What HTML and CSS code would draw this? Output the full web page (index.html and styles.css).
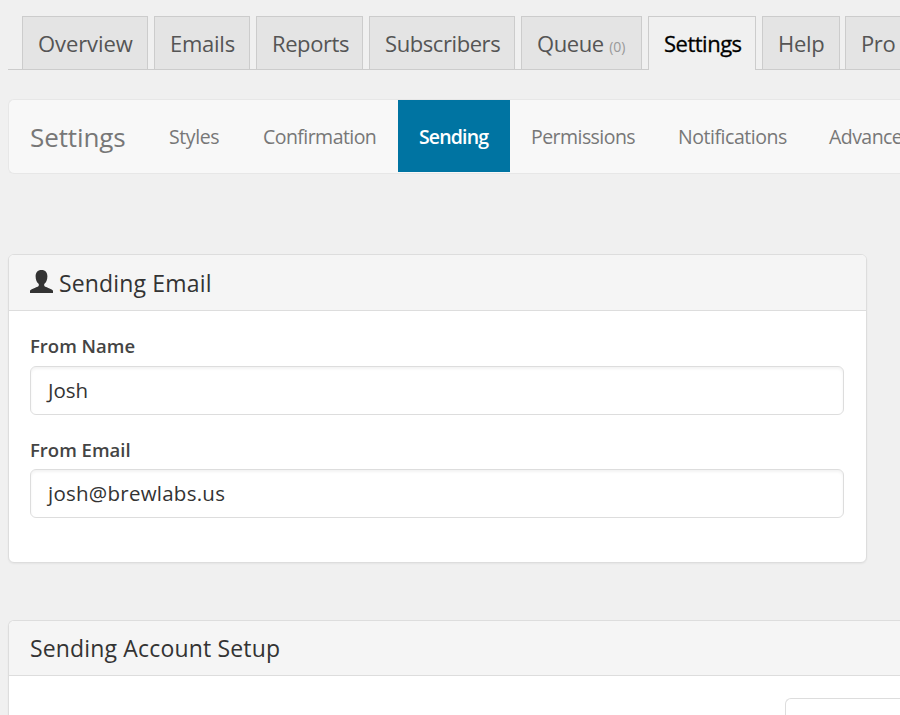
FILE: index.html
```html
<!DOCTYPE html>
<html lang="en">
<head>
<meta charset="utf-8">
<title>Settings</title>
<link rel="stylesheet" href="styles.css">
</head>
<body>
<nav class="tabs">
  <a class="tab overview">Overview</a>
  <a class="tab emails">Emails</a>
  <a class="tab reports">Reports</a>
  <a class="tab subscribers">Subscribers</a>
  <a class="tab queue">Queue <small>(0)</small></a>
  <a class="tab current">Settings</a>
  <a class="tab help">Help</a>
  <a class="tab pro">Pro</a>
</nav>
<nav class="subnav">
  <span class="brand">Settings</span>
  <a class="link styles">Styles</a>
  <a class="link confirmation">Confirmation</a>
  <a class="link active">Sending</a>
  <a class="link permissions">Permissions</a>
  <a class="link notifications">Notifications</a>
  <a class="link advanced">Advanced</a>
</nav>
<section class="panel">
  <h3 class="panel-head"><svg class="user" viewBox="0 0 23 23"><path d="M11.5 0C7.500 0 5.600 2.600 5.600 6.200C5.600 9.800 6.900 12.700 8.800 14.100V15.400C8.500 16.500 7.200 16.800 5.700 17.400L1.300 19.400C.3 19.900 0 20.500 0 21.300V23H23V21.300C23 20.500 22.700 19.900 21.700 19.400L17.300 17.400C15.800 16.800 14.500 16.500 14.200 15.400V14.100C16.100 12.700 17.400 9.800 17.400 6.200C17.400 2.600 15.500 0 11.500 0Z"/></svg><span class="title">Sending Email</span></h3>
  <div class="panel-body">
    <div class="label name">From Name</div>
    <div class="input">Josh</div>
    <div class="label email">From Email</div>
    <div class="input address">josh@brewlabs.us</div>
  </div>
</section>
<section class="panel wide">
  <h3 class="panel-head"><span class="title setup">Sending Account Setup</span></h3>
  <div class="panel-body"><div class="input box"></div></div>
</section>
</body>
</html>
```
FILE: styles.css
```css
* { box-sizing: border-box; }
html, body { height: 715px; overflow: hidden; }
body { margin: 0; padding: 16px 0 0 8px; background: #f0f0f0; font-family: "Open Sans", sans-serif; color: #333; }
.tabs { display: flex; gap: 6px; height: 54px; width: 892px; overflow: hidden; padding-left: 14px; border-bottom: 1px solid #ccc; }
.tabs { overflow: visible; }
.tab { flex: none; height: 53px; padding-left: 15px; border: 1px solid #ccc; border-bottom: 0; background: #e4e4e4; color: #555; font-size: 22px; line-height: 53px; letter-spacing: -.42px; white-space: nowrap; }
.tab small { font-size: 14px; color: #999; letter-spacing: 0; }
.overview { width: 126px; letter-spacing: -.1px; }
.emails { width: 96px; letter-spacing: -.25px; }
.reports { width: 107px; }
.subscribers { width: 146px; }
.queue { width: 121px; letter-spacing: -.4px; }
.current { width: 108px; height: 54px; background: #f0f0f0; color: #000; -webkit-text-stroke: .3px; letter-spacing: -.5px; }
.help { width: 78px; letter-spacing: -.3px; }
.pro { width: 56px; margin-left: -1px; border-right: 0; }
.subnav { display: flex; width: 892px; height: 75px; margin-top: 29px; padding-left: 21px; background: #f8f8f8; border: 1px solid #e7e7e7; border-right: 0; border-radius: 6px 0 0 6px; line-height: 74px; color: #777; }
.brand { flex: none; width: 118px; font-size: 26px; letter-spacing: -.1px; }
.link { flex: none; padding-left: 21px; font-size: 19.5px; letter-spacing: -.55px; white-space: nowrap; }
.styles { width: 94px; letter-spacing: -.4px; }
.confirmation { width: 156px; }
.active { width: 112px; height: 72px; background: #0074a2; color: #fff; font-weight: 600; letter-spacing: -.85px; }
.permissions { width: 147px; }
.notifications { width: 151px; letter-spacing: -.45px; }
.panel { width: 859px; height: 309px; margin-top: 80px; background: #fff; border: 1px solid #ddd; border-radius: 6px; box-shadow: 0 1px 2px rgba(0,0,0,.05); overflow: hidden; }
.wide { width: 892px; height: 200px; margin-top: 57px; border-right: 0; border-radius: 6px 0 0 0; }
.panel-head { display: flex; align-items: center; height: 56px; margin: 0; padding-left: 21px; background: #f5f5f5; border-bottom: 1px solid #ddd; font-size: 23px; font-weight: 400; letter-spacing: .16px; line-height: 30px; }
.user { width: 23px; height: 23px; margin: 0 6px 3px 0; fill: #333; }
.panel-body { padding: 21px; }
.label { height: 34px; font-size: 18.5px; font-weight: 600; line-height: 28px; color: #444; }
.email { margin-top: 21px; }
.input { width: 814px; height: 49px; padding-left: 17px; border: 1px solid #ddd; border-radius: 6px; background: #fff; box-shadow: inset 0 2px 3px rgba(0,0,0,.05); font-size: 20.5px; line-height: 46px; }
.address { letter-spacing: .25px; margin-top: -1px; }
.wide .panel-head { height: 55px; }
.wide .panel-body { padding-top: 22px; }
.box { margin-left: 755px; width: 115px; border-right: 0; border-radius: 6px 0 0 0; box-shadow: none; }
```
